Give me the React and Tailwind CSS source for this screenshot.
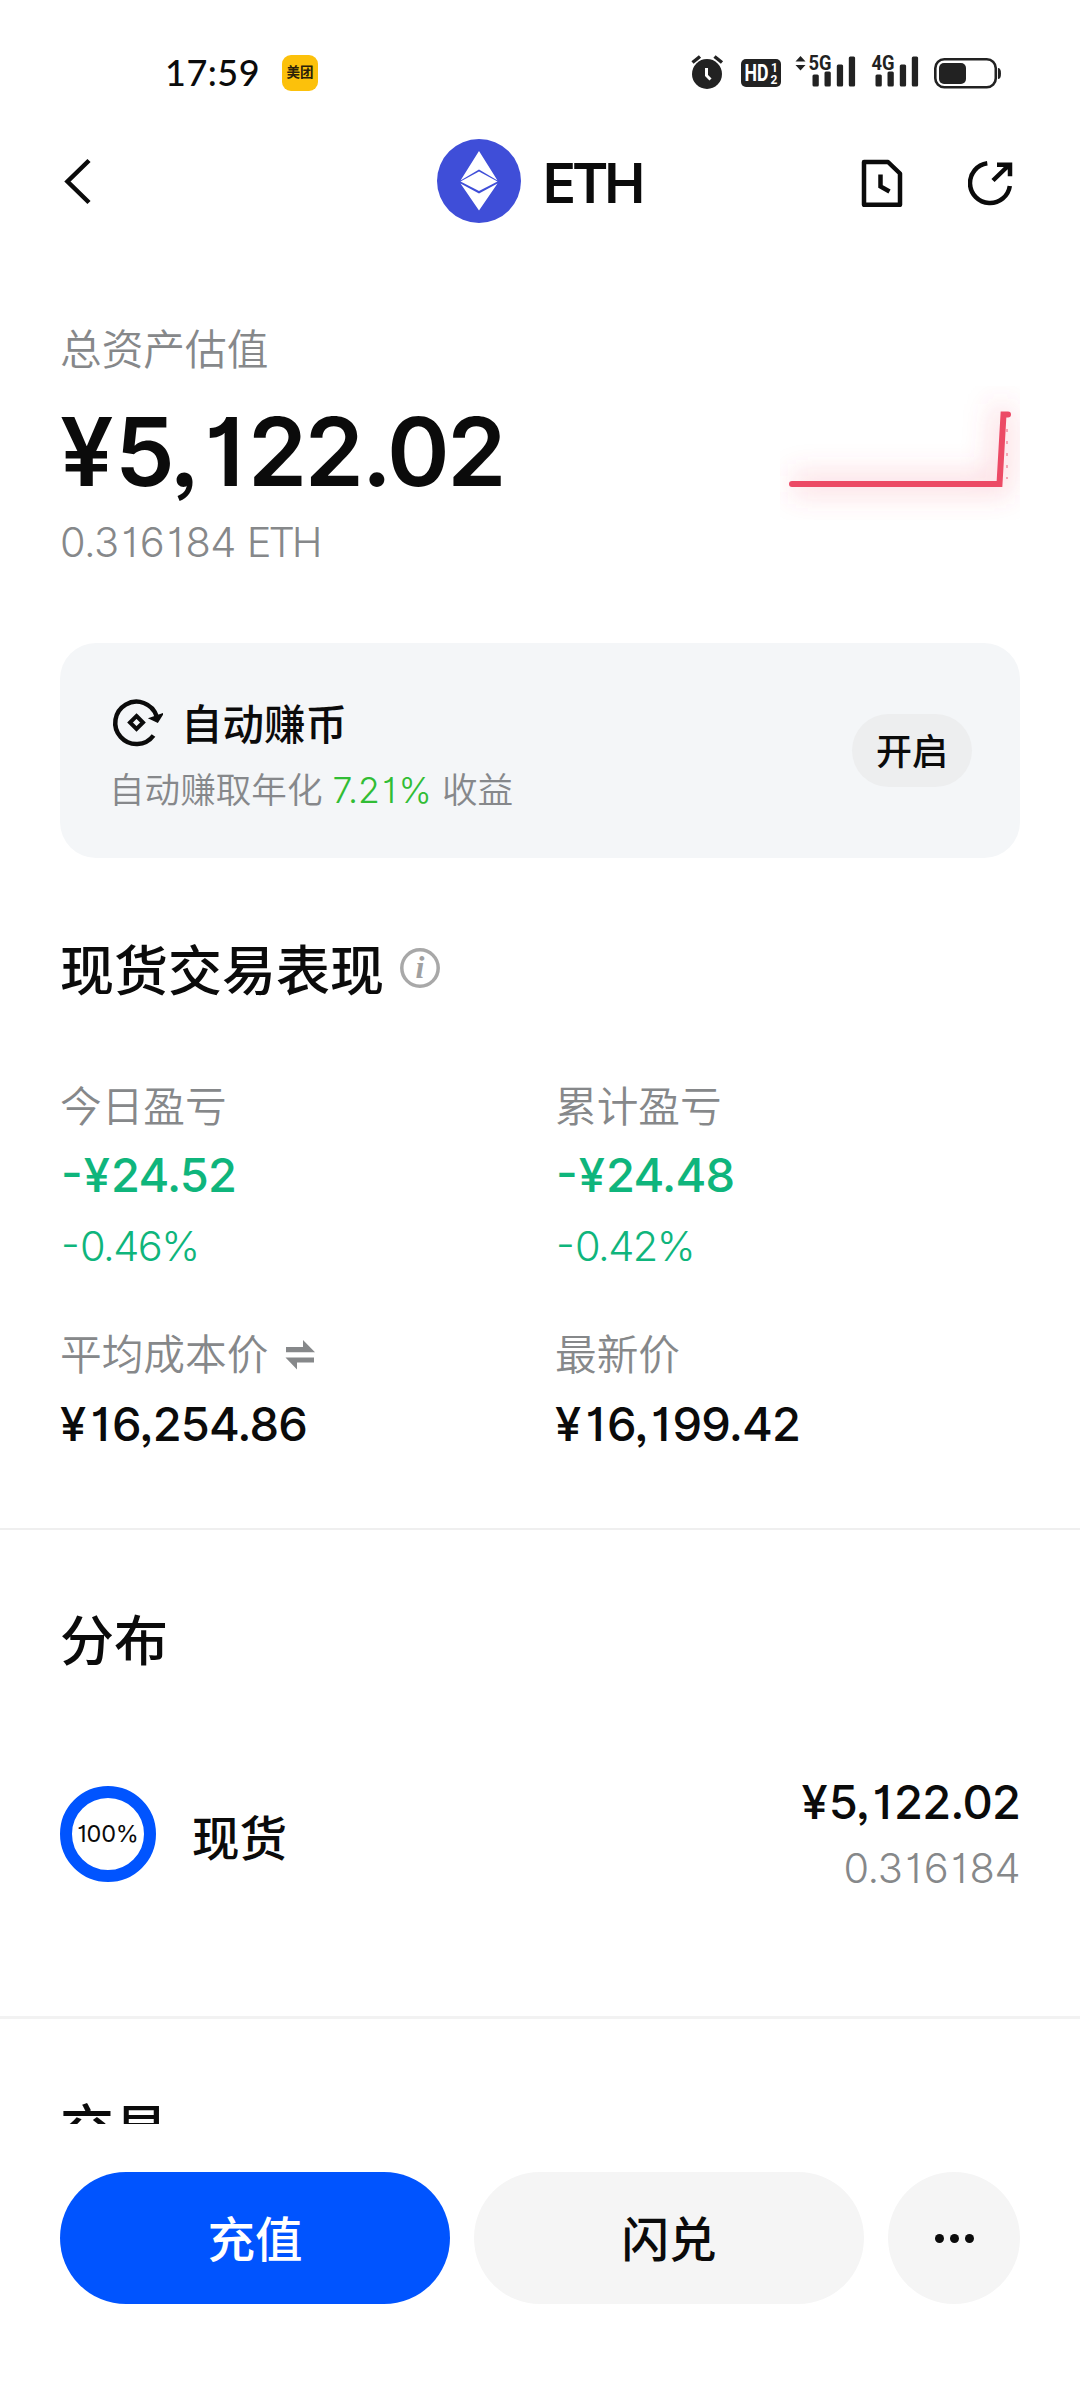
const stats = [
  { label: '今日盈亏', value: '-¥24.52', percent: '-0.46%' },
  { label: '累计盈亏', value: '-¥24.48', percent: '-0.42%' },
]

const signalBars = [
  { x: 0, y: 19.5, h: 12 },
  { x: 12, y: 16.5, h: 15 },
  { x: 24.3, y: 9.5, h: 22 },
  { x: 36.3, y: 1.5, h: 30 },
]

// the narrow 1 and the signs get extra room so that amounts keep an even pitch
const glyphSpacing = {
  1: 'mx-[0.07em]',
  '¥': 'mr-[0.04em]',
  '-': 'mr-[0.04em]',
}

function Figure({ value }) {
  return value.split(/([1¥-])/).map((part, i) =>
    glyphSpacing[part] ? (
      <span key={i} className={glyphSpacing[part]}>
        {part}
      </span>
    ) : (
      part
    )
  )
}

function SignalIcon({ label, arrows }) {
  const left = arrows ? 14 : 0
  return (
    <svg width={left + 47} height="36" className="overflow-visible fill-[#222222]">
      {arrows && <path d="M.5 6.500L5.500 1l5 5.500zM.5 10h10L5.500 15.500z" />}
      <text
        x={left - 0.5}
        y="14.500"
        textLength="23"
        lengthAdjust="spacingAndGlyphs"
        className="font-[Roboto] text-[21px] font-bold"
      >
        {label}
      </text>
      {signalBars.map((bar) => (
        <rect key={bar.x} x={bar.x + left + 3.5} y={bar.y} width="6.300" height={bar.h} rx="1.500" />
      ))}
    </svg>
  )
}

function StatusBar() {
  return (
    <div className="mt-[50px] flex h-[45px] items-center pr-[78px] pl-[165px]">
      <span className="font-[Lato] text-[36px] leading-[45px] font-medium tracking-[0.5px]">17:59</span>
      <span className="ml-[22px] flex size-9 items-center justify-center rounded-[9px] bg-[#fcc10b] text-[13.5px] font-bold text-[#2b2108]">
        美团
      </span>
      <div className="ml-auto flex items-center">
        <svg width="34" height="36" viewBox="690 55 34 36" fill="none">
          <circle cx="707" cy="74" r="15" fill="#222222" />
          <path d="M692.500 62.500l7.500-6M714.500 56.500l7.500 6" stroke="#222222" strokeWidth="3.500" />
          <path d="M706.500 68v7.500l4 4" stroke="#fff" strokeWidth="3" />
        </svg>
        <svg width="40" height="28" viewBox="0 0 40 28" className="ml-[17px]">
          <rect width="40" height="28" rx="5" fill="#222222" />
          <g fill="#fff" className="font-[Roboto] font-bold">
            <text x="3.500" y="22" textLength="24" lengthAdjust="spacingAndGlyphs" className="text-[23px]">
              HD
            </text>
            <text x="30" y="12.500" className="text-[12px]">1</text>
            <text x="29.500" y="24.500" className="text-[12px]">2</text>
          </g>
        </svg>
        <div className="ml-[14px]">
          <SignalIcon label="5G" arrows />
        </div>
        <div className="ml-[16px]">
          <SignalIcon label="4G" />
        </div>
        <svg width="69" height="32" viewBox="933 56 69 32" className="ml-[14px]">
          <rect x="935.300" y="58.200" width="60.500" height="28" rx="9" fill="none" stroke="#222222" strokeWidth="2.600" />
          <rect x="939" y="62" width="27" height="21" rx="5" fill="#222222" />
          <path d="M998 67q3 0 3 5.500t-3 5.500z" fill="#222222" />
        </svg>
      </div>
    </div>
  )
}

function Header() {
  return (
    <header className="grid h-[172px] grid-cols-[1fr_auto_1fr] items-center px-[64px]">
      <svg width="28" height="48" viewBox="64 156 28 48" fill="none" stroke="#0b0b0b" strokeWidth="4.500">
        <path d="M89 159.500L67.500 180.500L89 201.500" />
      </svg>
      <div className="mr-[2px] flex items-center">
        <svg width="84" height="84" viewBox="0 0 84 84">
          <circle cx="42" cy="42" r="42" fill="#3f4ed8" />
          <path d="M42 12L60.500 41.500L42 30.500L23.500 41.500z" fill="#fff" />
          <path d="M42 32.500L60.500 42.500L42 52L23.500 42.500z" fill="#fff" />
          <path d="M42 71.500L60.500 44.500L42 54.500L23.500 44.500z" fill="#fff" />
        </svg>
        <span className="ml-[22px] pt-[4px] text-[55px] leading-[60px] font-semibold tracking-[-4px]">ETH</span>
      </div>
      <div className="mr-[3px] flex items-center gap-[65px] justify-self-end pt-1">
        <svg width="42" height="48" viewBox="861 158 42 48" fill="none" stroke="#0b0b0b" strokeWidth="4.500">
          <path d="M864 161h24l12 11.500v31.300h-36z" strokeLinejoin="round" />
          <path d="M880.500 173.500v12l9 5" />
        </svg>
        <svg width="45" height="46" viewBox="968 161 45 46" fill="none" stroke="#0b0b0b" strokeWidth="4.500">
          <path d="M987.300 164.300A20 20 0 1 0 1009.800 187" />
          <path d="M993 181.500L1009 166M997 165.800h13v11.500" />
        </svg>
      </div>
    </header>
  )
}

function Sparkline() {
  const line = 'M792 484H999.500L1003.500 414.500H1008'
  return (
    <svg width="240" height="134" viewBox="780 386 240 134" fill="none" className="mt-[68px]">
      <defs>
        <filter id="glow" x="-30%" y="-80%" width="160%" height="260%">
          <feGaussianBlur stdDeviation="14" />
        </filter>
      </defs>
      <path d={line} stroke="#f0506a" strokeWidth="22" strokeOpacity="0.200" filter="url(#glow)" />
      <path d="M1007 429v50" stroke="#f5a6b4" strokeWidth="2" strokeDasharray="3 9" />
      <path d={line} stroke="#ec4a65" strokeWidth="6" strokeLinecap="round" />
    </svg>
  )
}

function Price({ value }) {
  return (
    <p className="text-[47px] leading-[60px] font-medium tracking-[-0.850px]">
      <Figure value={value} />
    </p>
  )
}

function EarnCard() {
  return (
    <section className="mt-[73px] flex h-[215px] items-center justify-between rounded-[36px] bg-[#f4f6f8] pr-12 pl-[49px]">
      <div className="pt-[12px]">
        <div className="flex items-center">
          <svg width="54" height="52" viewBox="109 697 54 52" fill="none" stroke="#0b0b0b" strokeWidth="4.500" className="mb-[3px]">
            <path d="M153.500 735.500A21.200 21.200 0 1 1 156.500 716" />
            <path d="M150.500 718.500L162 714.500L157.500 721.800z" fill="#0b0b0b" strokeWidth="2" />
            <path d="M136.500 716l6.500 6.500l-6.500 6.500l-6.500-6.500z" strokeWidth="4" />
          </svg>
          <span className="ml-[18px] text-[41.500px] leading-[60px] font-medium">自动赚币</span>
        </div>
        <p className="mt-[8px] text-[35.600px] leading-[56px] font-[350] text-[#86888b]">
          自动赚取年化{' '}
          <span className="text-[#31bd35]">
            <Figure value="7.21%" />
          </span>{' '}
          收益
        </p>
      </div>
      <button className="h-[73px] w-[120px] rounded-full bg-[#edeeef] pt-[2px] text-[36px] leading-[70px] font-medium">
        开启
      </button>
    </section>
  )
}

function SwapIcon() {
  return (
    <svg width="30" height="30" viewBox="285 1340 30 30" fill="#86888a" className="ml-[17px]">
      <path d="M286 1347h17v-7l12 12.200h-29zM285.500 1357.500H314v5h-17v7z" />
    </svg>
  )
}

function Performance() {
  return (
    <section className="mt-[79px]">
      <div className="flex items-center">
        <h2 className="text-[54px] leading-[70px] font-medium">现货交易表现</h2>
        <svg width="40" height="40" viewBox="0 0 40 40" className="mb-[8px] ml-[16px]">
          <circle cx="20" cy="20" r="18.200" fill="none" stroke="#a8a8a8" strokeWidth="3.500" />
          <text
            x="20"
            y="30"
            textAnchor="middle"
            fill="#a0a0a0"
            className="font-['Liberation_Serif'] text-[32px] font-bold italic"
          >
            i
          </text>
        </svg>
      </div>
      <div className="mt-[70px] grid grid-cols-[495px_1fr]">
        {stats.map((stat) => (
          <div key={stat.label} className="text-[#0fb57c]">
            <p className="text-[41.700px] leading-[60px] font-[350] text-[#86888a]">{stat.label}</p>
            <p className="mt-[8px] pl-[1px] text-[47px] leading-[60px] font-medium tracking-[-0.800px]">
              <Figure value={stat.value} />
            </p>
            <p className="mt-[11px] pl-[1px] text-[41.500px] leading-[60px] font-[350] tracking-[-1.500px]">
              <Figure value={stat.percent} />
            </p>
          </div>
        ))}
      </div>
      <div className="mt-[49px] grid grid-cols-[495px_1fr] gap-y-[9px]">
        <p className="flex items-center text-[41.700px] leading-[60px] font-[350] text-[#86888a]">
          平均成本价
          <SwapIcon />
        </p>
        <p className="text-[41.700px] leading-[60px] font-[350] text-[#86888a]">最新价</p>
        <Price value="¥16,254.86" />
        <Price value="¥16,199.42" />
      </div>
    </section>
  )
}

function Distribution() {
  return (
    <section className="px-[60px] pt-[77px]">
      <h2 className="text-[54px] leading-[70px] font-medium">分布</h2>
      <div className="mt-[95px] flex h-[122px] items-center">
        <div className="mt-[2px] flex size-24 items-center justify-center rounded-full border-[12px] border-[#0054ff] text-[23.500px] tracking-[-0.200px]">
          100%
        </div>
        <span className="ml-[36px] pt-[11px] text-[47.500px] leading-[60px] font-medium">现货</span>
        <div className="ml-auto text-right">
          <Price value="¥5,122.02" />
          <p className="mt-[10px] text-[41.500px] leading-[52px] font-[350] tracking-[-0.500px] text-[#86888a]">
            <Figure value="0.316184" />
          </p>
        </div>
      </div>
    </section>
  )
}

function ActionBar() {
  return (
    <footer className="flex gap-6 px-[60px] pt-12 text-[47.500px] font-medium">
      <button className="h-[132px] flex-1 rounded-full bg-[#0054ff] pt-[3px] text-white">充值</button>
      <button className="h-[132px] flex-1 rounded-full bg-[#f5f5f5] pt-[3px]">闪兑</button>
      <button className="flex size-[132px] items-center justify-center gap-[6px] rounded-full bg-[#f5f5f5]">
        <i className="size-[9px] rounded-full bg-[#0b0b0b]" />
        <i className="size-[9px] rounded-full bg-[#0b0b0b]" />
        <i className="size-[9px] rounded-full bg-[#0b0b0b]" />
      </button>
    </footer>
  )
}

export default function App() {
  return (
    <div className="h-[2400px] w-[1080px] overflow-hidden bg-white font-[Inter,'Noto_Sans_CJK_SC',sans-serif] text-[#0b0b0b] [font-feature-settings:'case','cv01','ss03']">
      <main className="flow-root h-[2124px] overflow-hidden">
        <StatusBar />
        <Header />
        <div className="px-[60px]">
          <div className="flex justify-between pt-[51px]">
            <div>
              <p className="text-[41.700px] leading-[64px] font-[350] text-[#86888a]">总资产估值</p>
              <p className="mt-[20px] text-[95px] leading-[100px] font-semibold tracking-[-2.400px]">
                <Figure value="¥5,122.02" />
              </p>
              <p className="mt-[12px] text-[41.500px] leading-[56px] font-[350] tracking-[-0.600px] text-[#86888a]">
                <Figure value="0.316184" /> <span className="tracking-[-3px]">ETH</span>
              </p>
            </div>
            <Sparkline />
          </div>
          <EarnCard />
          <Performance />
        </div>
        <hr className="mt-[74px] h-[2px] border-0 bg-[#efefef]" />
        <Distribution />
        <hr className="mt-[122px] h-[3px] border-0 bg-[#f2f2f2]" />
        <h2 className="mt-[77px] px-[60px] text-[54px] leading-[70px] font-medium">交易</h2>
      </main>
      <ActionBar />
    </div>
  )
}
